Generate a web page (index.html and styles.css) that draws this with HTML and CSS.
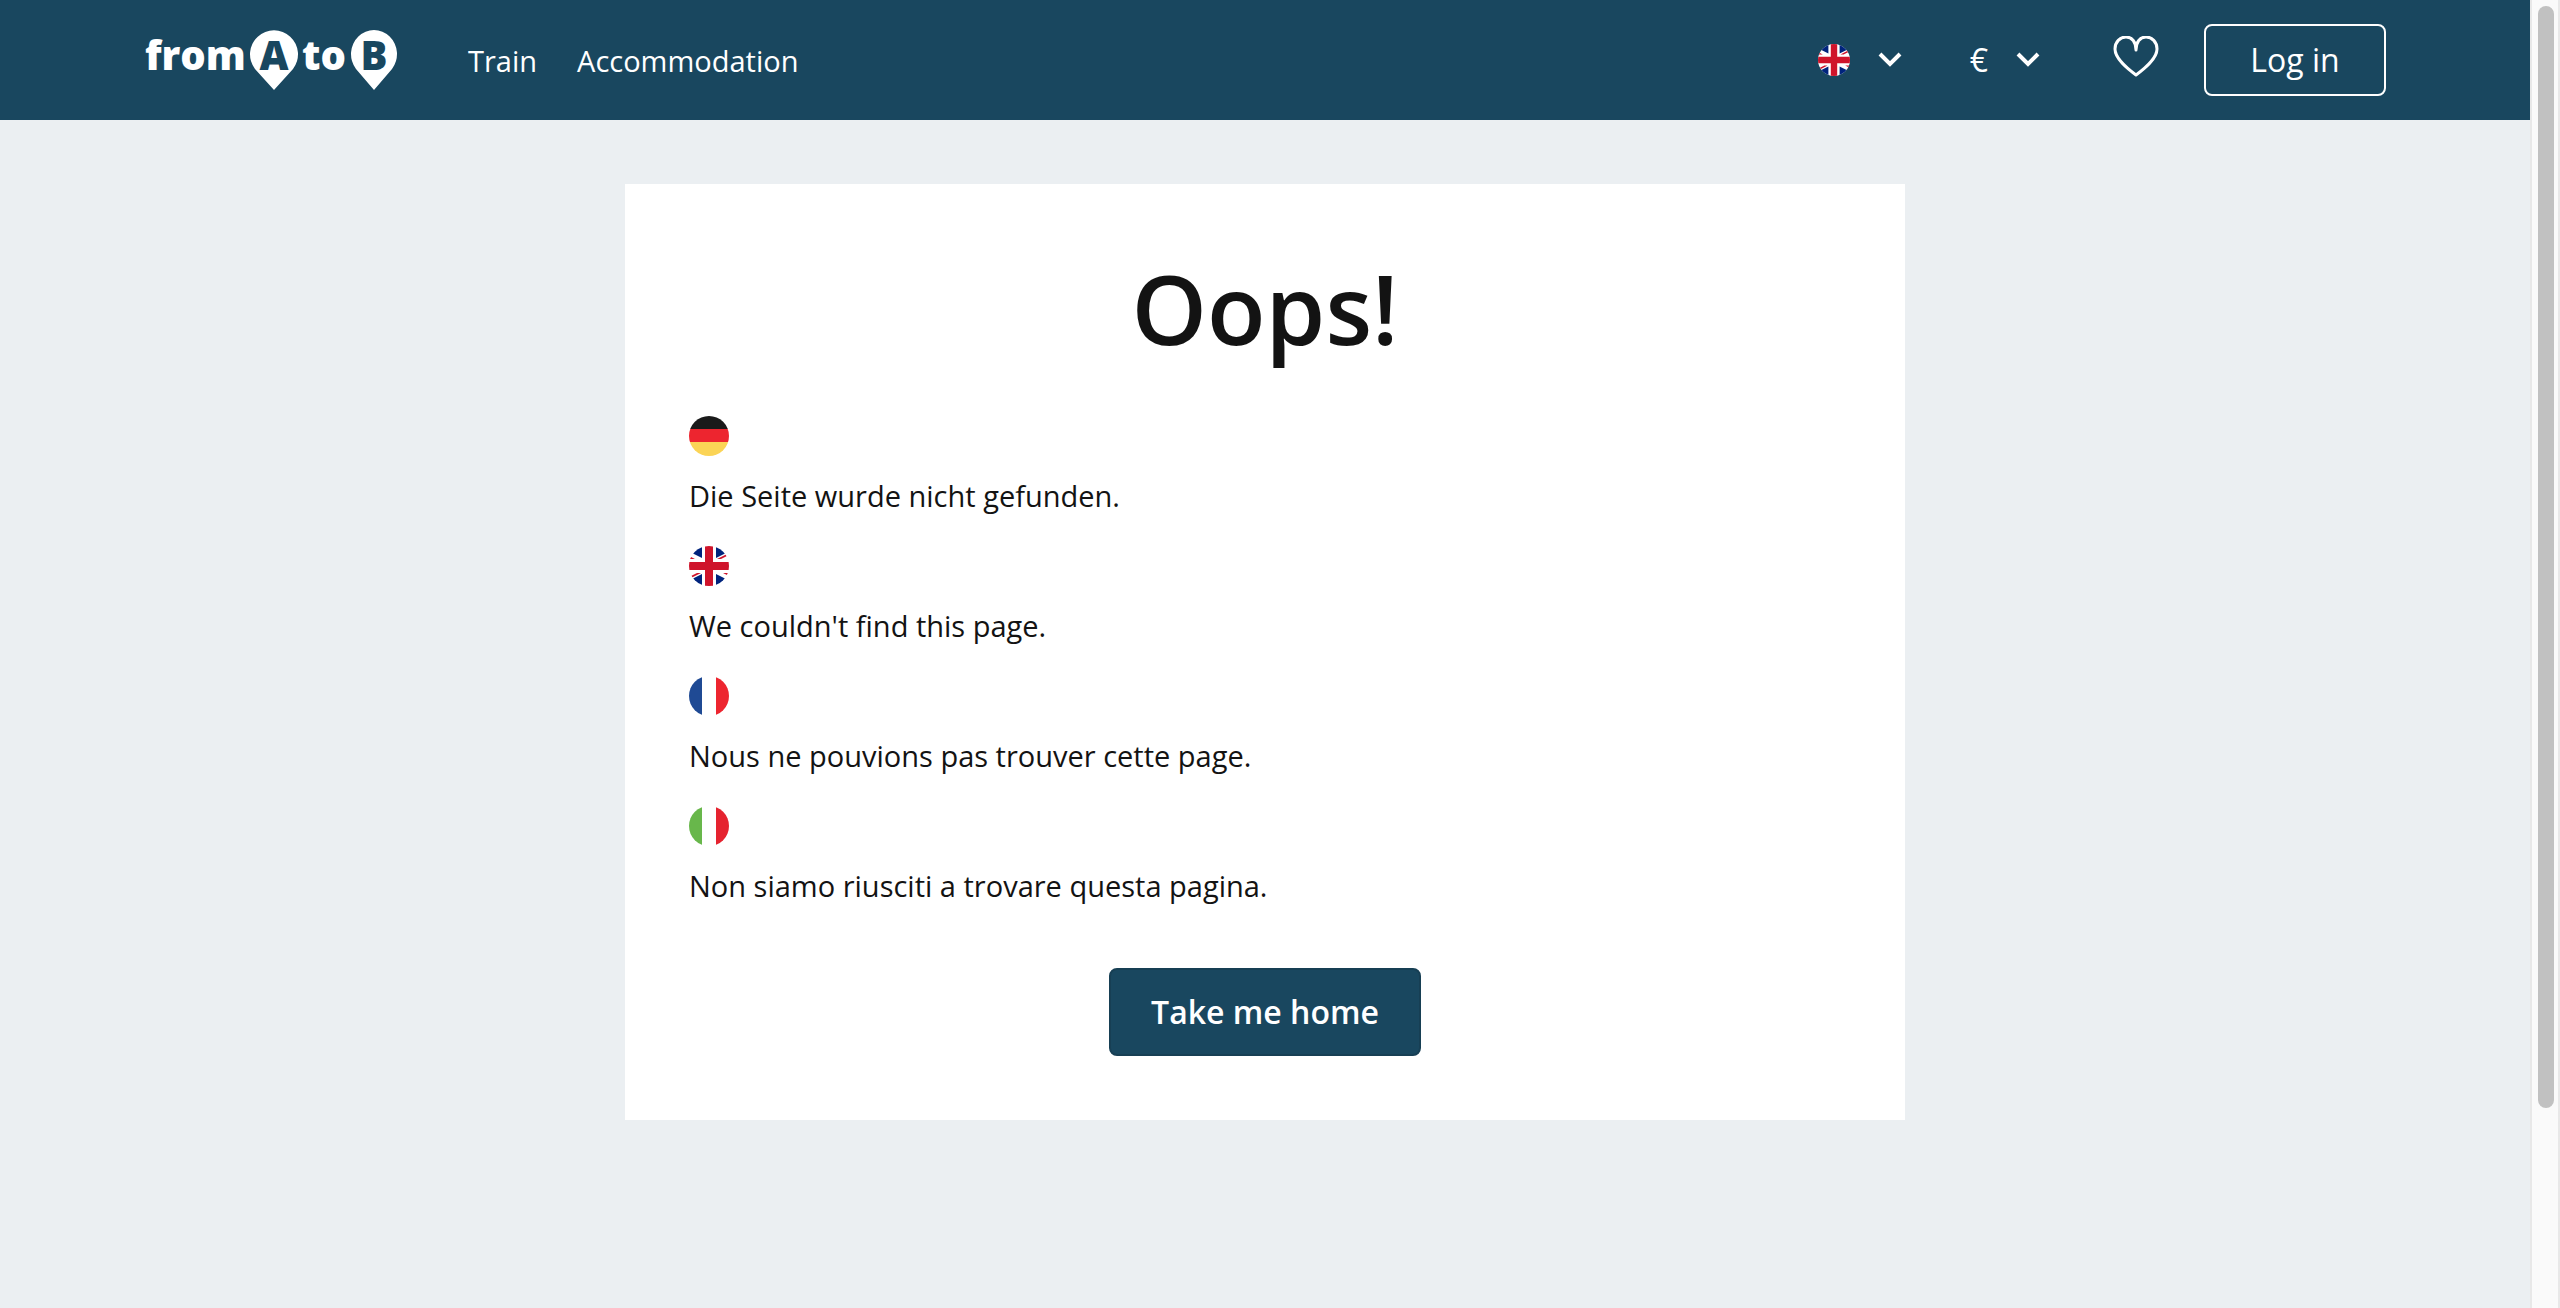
FILE: index.html
```html
<!DOCTYPE html>
<html lang="en">
<head>
<meta charset="utf-8">
<meta name="viewport" content="width=device-width, initial-scale=1">
<title>fromAtoB</title>
<link rel="stylesheet" href="styles.css">
</head>
<body>
<svg class="sprite" aria-hidden="true">
  <defs>
    <clipPath id="disc"><circle cx="20" cy="20" r="20"/></clipPath>
    <symbol id="flag-gb" viewBox="0 0 40 40">
      <g clip-path="url(#disc)">
        <path fill="#fff" d="M0 0h40v40H0z"/>
        <path fill="#00247d" d="M13 0v12L3 7V0zM27 0v12L37 7V0zM13 40V28L3 33v7zM27 40V28L37 33v7z"/>
        <path fill="#cf142b" d="M0 10l6 3H0zM28 13h4l8-4V7zM12 27H8l-8 4v2zM34 27h6v3z"/>
        <path fill="#cf142b" d="M16 0h8v40h-8zM0 16h40v8H0z"/>
      </g>
    </symbol>
    <symbol id="chevron" viewBox="0 0 24 16">
      <path fill="none" stroke="#fff" stroke-width="4" d="M2 2l10 10L22 2"/>
    </symbol>
  </defs>
</svg>
<div class="window">
  <div class="page">
    <header class="header">
      <a class="logo" href="#" aria-label="fromAtoB">
        <svg width="256" height="96" viewBox="0 0 256 96">
          <g fill="#fff">
            <path d="M130 78L111 57A24 24 0 1 1 149 57Z"/>
            <path d="M230 78L212 57A23 24 0 1 1 248 57Z"/>
            <text x="1" y="58">from</text>
            <text x="158" y="58">to</text>
          </g>
          <g fill="#19475f" text-anchor="middle">
            <text x="130" y="58">A</text>
            <text x="230" y="58">B</text>
          </g>
        </svg>
      </a>
      <nav class="nav">
        <a href="#">Train</a>
        <a href="#">Accommodation</a>
      </nav>
      <div class="tools">
        <button class="picker" type="button" aria-label="Language">
          <svg width="32" height="32"><use href="#flag-gb"/></svg>
          <svg width="24" height="16"><use href="#chevron"/></svg>
        </button>
        <button class="picker" type="button" aria-label="Currency">
          <span class="currency">€</span>
          <svg width="24" height="16"><use href="#chevron"/></svg>
        </button>
        <button class="favourites" type="button" aria-label="Favourites">
          <svg width="48" height="48" viewBox="0 0 48 48">
            <path fill="none" stroke="#fff" stroke-width="3" stroke-linejoin="round" d="M24 39C16 33 3 23 3 13C3 6 8 1 14 1C20 1 24 6 24 14C24 6 28 1 34 1C40 1 45 6 45 13C45 23 32 33 24 39Z"/>
          </svg>
        </button>
        <button class="login" type="button">Log in</button>
      </div>
    </header>
    <main class="main">
      <section class="card">
        <h1>Oops!</h1>
        <ul class="messages">
          <li lang="de">
            <svg width="40" height="40" viewBox="0 0 40 40"><g clip-path="url(#disc)"><path fill="#1a1a1a" d="M0 0h40v13H0z"/><path fill="#ed252f" d="M0 13h40v13H0z"/><path fill="#fbd456" d="M0 26h40v14H0z"/></g></svg>
            <p>Die Seite wurde nicht gefunden.</p>
          </li>
          <li lang="en">
            <svg width="40" height="40"><use href="#flag-gb"/></svg>
            <p>We couldn't find this page.</p>
          </li>
          <li lang="fr">
            <svg width="40" height="40" viewBox="0 0 40 40"><g clip-path="url(#disc)"><path fill="#1f4a94" d="M0 0h13v40H0z"/><path fill="#ed252f" d="M27 0h13v40H27z"/></g></svg>
            <p>Nous ne pouvions pas trouver cette page.</p>
          </li>
          <li lang="it">
            <svg width="40" height="40" viewBox="0 0 40 40"><g clip-path="url(#disc)"><path fill="#68b74b" d="M0 0h13v40H0z"/><path fill="#e5232f" d="M27 0h13v40H27z"/></g></svg>
            <p>Non siamo riusciti a trovare questa pagina.</p>
          </li>
        </ul>
        <button class="home" type="button">Take me home</button>
      </section>
    </main>
  </div>
  <div class="scrollbar" aria-hidden="true"><div class="thumb"></div></div>
</div>
</body>
</html>
```

FILE: styles.css
```css
* { box-sizing: border-box; }

body {
  margin: 0;
  font-family: "Open Sans", "Noto Sans", sans-serif;
  font-size: 29px;
  line-height: 40px;
  color: #131313;
  background: #ebeff2;
}

.sprite { position: absolute; width: 0; height: 0; }

svg { display: block; }

button {
  font: inherit;
  color: #fff;
  background: none;
  border: 0;
  padding: 0;
  cursor: pointer;
}

.window { display: flex; min-height: 100vh; }

.page { flex: 1; }

.header {
  display: flex;
  align-items: center;
  height: 120px;
  padding: 0 144px;
  background: #19475f;
}

.logo text {
  font-family: "Open Sans", sans-serif;
  font-size: 40px;
  font-weight: 800;
}

.nav {
  display: flex;
  gap: 40px;
  margin-left: 68px;
  padding-top: 2px;
}

.nav a { color: #fff; text-decoration: none; }

.tools {
  display: flex;
  align-items: center;
  margin-left: auto;
}

.picker {
  display: flex;
  align-items: center;
  gap: 28px;
  margin-right: 68px;
}

.currency { font-size: 32px; }

.favourites { margin: 0 44px 0 4px; }

.login {
  min-width: 182px;
  height: 72px;
  padding: 0 40px;
  font-size: 32px;
  border: 2px solid #fff;
  border-radius: 8px;
}

.main { padding: 64px; }

.card {
  max-width: 1280px;
  margin: 0 auto;
  padding: 64px;
  text-align: center;
  background: #fff;
}

h1 {
  margin: 0 0 48px;
  font-size: 96px;
  font-weight: 600;
  line-height: 120px;
}

.messages {
  margin: 0 0 32px;
  padding: 0;
  list-style: none;
  text-align: left;
}

.messages p { margin: 0; padding: 20px 0 30px; }

.home {
  height: 88px;
  padding: 0 40px;
  font-size: 32px;
  font-weight: 600;
  background: #19475f;
  border: 2px solid #173f54;
  border-radius: 8px;
}

.scrollbar {
  width: 30px;
  height: 100vh;
  padding: 6px;
  background: #fafafa;
  border: solid #e8e8e8;
  border-width: 0 2px;
}

.thumb {
  width: 16px;
  height: 85%;
  border-radius: 8px;
  background: #c1c1c1;
}
```
